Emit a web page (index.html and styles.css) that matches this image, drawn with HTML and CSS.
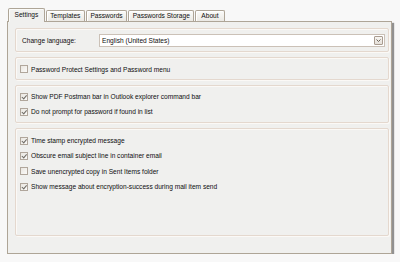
FILE: index.html
```html
<!DOCTYPE html>
<html>
<head>
<meta charset="utf-8">
<link rel="stylesheet" href="styles.css">
</head>
<body>
<div class="window">
  <div class="tabs">
    <div class="tab active">Settings</div>
    <div class="tab">Templates</div>
    <div class="tab">Passwords</div>
    <div class="tab">Passwords Storage</div>
    <div class="tab">About</div>
  </div>
  <div class="panel">
    <div class="group g1">
      <span class="label">Change language:</span>
      <div class="select">
        <span class="select-text">English (United States)</span>
        <span class="select-btn"><svg width="7" height="5" viewBox="0 0 7 5"><path d="M1.5 1.5 L3.5 3.5 L5.5 1.5" fill="none" stroke="#6b6258" stroke-width="1"/></svg></span>
      </div>
    </div>
    <div class="group g2">
      <div class="row"><span class="cb"></span><span>Password Protect Settings and Password menu</span></div>
    </div>
    <div class="group g3">
      <div class="row"><span class="cb checked"></span><span>Show PDF Postman bar in Outlook explorer command bar</span></div>
      <div class="row"><span class="cb checked"></span><span>Do not prompt for password if found in list</span></div>
    </div>
    <div class="group g4">
      <div class="row"><span class="cb checked"></span><span>Time stamp encrypted message</span></div>
      <div class="row"><span class="cb checked"></span><span>Obscure email subject line in container email</span></div>
      <div class="row"><span class="cb"></span><span>Save unencrypted copy in Sent Items folder</span></div>
      <div class="row"><span class="cb checked"></span><span>Show message about encryption-success during mail item send</span></div>
    </div>
  </div>
</div>
</body>
</html>
```
FILE: styles.css
```css
html, body {
  margin: 0;
  padding: 0;
  background: #f8f8f8;
}
body {
  font-family: "Liberation Sans", Arial, sans-serif;
  font-size: 6.6px;
  color: #0e0e0e;
}
.window {
  padding: 6px 0 0 7px;
  width: 385px;
}
.tabs {
  display: flex;
  align-items: flex-end;
  height: 15px;
  padding-left: 1px;
  position: relative;
  z-index: 2;
}
.tab {
  height: 10px;
  line-height: 10px;
  padding: 0 3.5px;
  margin-right: 1px;
  border: 1px solid #aea597;
  border-bottom: none;
  border-radius: 2px 2px 0 0;
  background: linear-gradient(#fbfbf9, #ebe9e4);
  box-shadow: inset 1px 1px 0 #ffffff;
}
.tab:last-child {
  padding: 0 5px;
}
.tab.active {
  height: 13px;
  line-height: 12px;
  background: #f0f0ee;
  margin-bottom: -1px;
  padding: 0 5.5px;
  box-shadow: inset 1px 1px 0 #fbfbf9;
}
.panel {
  height: 225px;
  border: 1px solid #aea597;
  background: #f0f0ee;
  box-shadow: 2px 2px 1px rgba(60, 60, 60, 0.55);
  padding: 6px 2px 0 7px;
  display: flex;
  flex-direction: column;
  gap: 5px;
}
.group {
  border: 1px solid #e4d8ce;
  border-radius: 2px;
  box-shadow: inset 1px 1px 0 #fbf9f6, 1px 1px 0 #fbf9f6;
  box-sizing: border-box;
  flex: none;
}
.g1 {
  height: 24px;
  display: flex;
  align-items: center;
  padding: 0 3px 0 6px;
}
.label {
  width: 77px;
}
.select {
  flex: 1;
  height: 13px;
  border: 1px solid #cbc1b7;
  background: #ffffff;
  display: flex;
  align-items: center;
  justify-content: space-between;
  box-sizing: border-box;
  padding: 0 1px 0 2px;
}
.select-btn {
  width: 9px;
  height: 9px;
  border: 1px solid #a99c90;
  border-radius: 1px;
  background: linear-gradient(#f7f5f1, #e4dfd8);
  display: flex;
  align-items: center;
  justify-content: center;
  box-sizing: border-box;
}
.g2 {
  height: 23px;
  padding: 6px 0 0 4px;
}
.g3 {
  height: 38px;
  padding: 3px 0 0 4px;
}
.g4 {
  height: 108px;
  padding: 4px 0 0 4px;
}
.row {
  display: flex;
  align-items: center;
  height: 15.3px;
  white-space: nowrap;
}
.g2 .row { height: 10px; }
.cb {
  width: 8px;
  height: 8px;
  border: 1px solid #b0a69b;
  background: linear-gradient(135deg, #e9e6e0, #fbfaf8);
  box-sizing: border-box;
  margin-right: 3px;
  position: relative;
  flex: none;
}
.cb.checked::after {
  content: "";
  position: absolute;
  left: 2px;
  top: 0px;
  width: 1.5px;
  height: 3.5px;
  border-right: 1px solid #6e6a64;
  border-bottom: 1px solid #6e6a64;
  transform: rotate(40deg);
}
```
